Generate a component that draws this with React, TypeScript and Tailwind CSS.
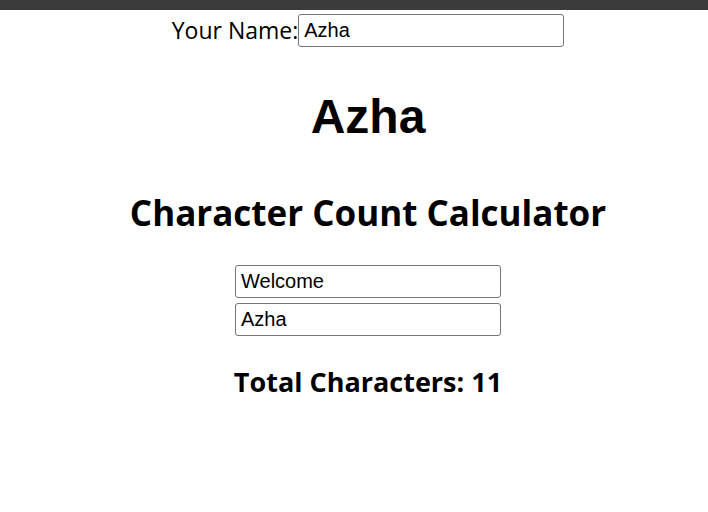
import React from "react";

const seg = '"Open Sans", "Noto Sans", sans-serif';
const arial = '"Liberation Sans", Arial, sans-serif';

function Field({ value }: { value: string }) {
  return (
    <input
      defaultValue={value}
      className="w-[266px] h-[33px] border border-[#767676] rounded-[3px] px-[5px] text-[20px] text-black outline-none font-['Liberation_Sans',Arial,sans-serif]"
    />
  );
}

export default function App() {
  return (
    <div className="w-[708px] h-[512px] bg-white overflow-hidden">
      <div className="h-[10px] bg-[#3b3b3b]" />
      <div className="pl-[28px]">
        <div className="flex justify-center items-center mt-[4px] h-[33px]">
          <span className="text-[23px] leading-[33px] text-black font-['Open_Sans','Noto_Sans',sans-serif]">
            Your Name:
          </span>
          <Field value="Azha" />
        </div>
        <h1 className="text-center text-[48px] font-bold leading-[48px] mt-[46px] text-black font-['Liberation_Sans',Arial,sans-serif]">
          Azha
        </h1>
        <h2 className="text-center text-[35px] font-bold leading-[48px] mt-[48px] text-black font-['Open_Sans','Noto_Sans',sans-serif]">
          Character Count Calculator
        </h2>
        <div className="flex flex-col items-center gap-[5px] mt-[28px]">
          <Field value="Welcome" />
          <Field value="Azha" />
        </div>
        <h3 className="text-center text-[27px] font-bold leading-[36px] mt-[28px] text-black font-['Open_Sans','Noto_Sans',sans-serif]">
          Total Characters: 11
        </h3>
      </div>
    </div>
  );
}
